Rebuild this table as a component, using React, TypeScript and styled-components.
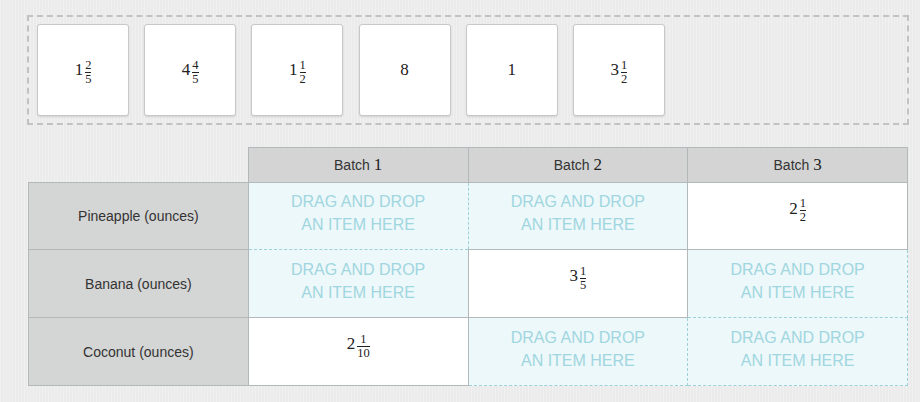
import React from 'react'
import styled, { createGlobalStyle } from 'styled-components'

const GlobalStyle = createGlobalStyle`
  body {
    margin: 0;
    background-color: #ebebeb;
    background-image: repeating-linear-gradient(90deg, rgba(255,255,255,0.25) 0 1px, transparent 1px 3px);
    font-family: 'Liberation Sans', Arial, sans-serif;
    color: #333;
  }
`

const Page = styled.div`
  width: 882px;
  padding: 15px 0 0 27px;
`

// tray of draggable answer tiles
const Tray = styled.div`
  display: flex;
  gap: 15.2px;
  height: 92px;
  padding: 7px 8px 7px 8px;
  border: 2px dashed #c2c2c2;
`

const Tile = styled.div`
  width: 90px;
  height: 90px;
  flex: none;
  display: flex;
  align-items: center;
  justify-content: center;
  background: #fff;
  border: 1px solid #c8c8c8;
  border-radius: 3px;
  box-shadow: 0 1px 2px rgba(0, 0, 0, 0.12);
`

const Grid = styled.table`
  margin-top: 22px;
  margin-left: 1px;
  width: 880px;
  table-layout: fixed;
  border-collapse: collapse;
`

const HeadCell = styled.th<{ $blank?: boolean }>`
  height: 34px;
  padding: 0;
  font-size: 14px;
  font-weight: normal;
  color: #333;
  background: ${p => (p.$blank ? 'transparent' : '#d4d4d4')};
  border: ${p => (p.$blank ? 'none' : '1px solid #b3b8ba')};
`

const Row = styled.tr<{ $tall?: boolean }>`
  height: ${p => (p.$tall ? '68px' : '67px')};
`

const RowLabel = styled.th`
  padding: 0;
  font-size: 14px;
  font-weight: normal;
  color: #333;
  background: #d4d5d5;
  border: 1px solid #b3b8ba;
`

const Cell = styled.td<{ $empty?: boolean }>`
  padding: 0;
  text-align: center;
  vertical-align: middle;
  background: ${p => (p.$empty ? '#edf8fa' : '#fff')};
  border: ${p => (p.$empty ? '1px dashed #9ed0d8' : '1px solid #b3b8ba')};
`

const DropText = styled.div`
  font-size: 16px;
  line-height: 23px;
  color: #a0d6df;
  text-transform: uppercase;
  margin-top: -6px;
`

const Filled = styled.div`
  display: flex;
  justify-content: center;
  margin-top: -15px;
`

const Num = styled.span`
  font-family: 'Liberation Serif', 'DejaVu Serif', serif;
  font-size: 17px;
  color: #222;
`

const Math = styled.span`
  display: inline-flex;
  align-items: center;
  font-family: 'Liberation Serif', 'DejaVu Serif', serif;
  color: #222;
`

const Whole = styled.span`
  font-size: 17px;
  margin-right: 2px;
`

const Frac = styled.span`
  display: inline-flex;
  flex-direction: column;
  align-items: center;
  font-size: 12.5px;
  line-height: 11px;
  position: relative;
  top: 2px;
`

const Bar = styled.span`
  align-self: stretch;
  height: 1px;
  margin: 1px 0;
  background: #222;
`

function Mixed({ whole, num, den }: { whole: number; num?: number; den?: number }) {
  if (!num) return <Num>{whole}</Num>
  return (
    <Math>
      <Whole>{whole}</Whole>
      <Frac>
        <span>{num}</span>
        <Bar />
        <span>{den}</span>
      </Frac>
    </Math>
  )
}

type Val = { whole: number; num?: number; den?: number }

const tiles: Val[] = [
  { whole: 1, num: 2, den: 5 },
  { whole: 4, num: 4, den: 5 },
  { whole: 1, num: 1, den: 2 },
  { whole: 8 },
  { whole: 1 },
  { whole: 3, num: 1, den: 2 },
]

const rows: { label: string; cells: (Val | null)[] }[] = [
  { label: 'Pineapple (ounces)', cells: [null, null, { whole: 2, num: 1, den: 2 }] },
  { label: 'Banana (ounces)', cells: [null, { whole: 3, num: 1, den: 5 }, null] },
  { label: 'Coconut (ounces)', cells: [{ whole: 2, num: 1, den: 10 }, null, null] },
]

export default function App() {
  return (
    <Page>
      <GlobalStyle />
      <Tray>
        {tiles.map((t, i) => (
          <Tile key={i}>
            <Mixed {...t} />
          </Tile>
        ))}
      </Tray>

      <Grid>
        <thead>
          <tr>
            <HeadCell $blank />
            {[1, 2, 3].map(n => (
              <HeadCell key={n}>
                Batch <Num>{n}</Num>
              </HeadCell>
            ))}
          </tr>
        </thead>
        <tbody>
          {rows.map((row, r) => (
            <Row key={row.label} $tall={r > 0}>
              <RowLabel>{row.label}</RowLabel>
              {row.cells.map((c, i) =>
                c ? (
                  <Cell key={i}>
                    <Filled>
                      <Mixed {...c} />
                    </Filled>
                  </Cell>
                ) : (
                  <Cell key={i} $empty>
                    <DropText>
                      Drag and drop
                      <br />
                      an item here
                    </DropText>
                  </Cell>
                )
              )}
            </Row>
          ))}
        </tbody>
      </Grid>
    </Page>
  )
}
